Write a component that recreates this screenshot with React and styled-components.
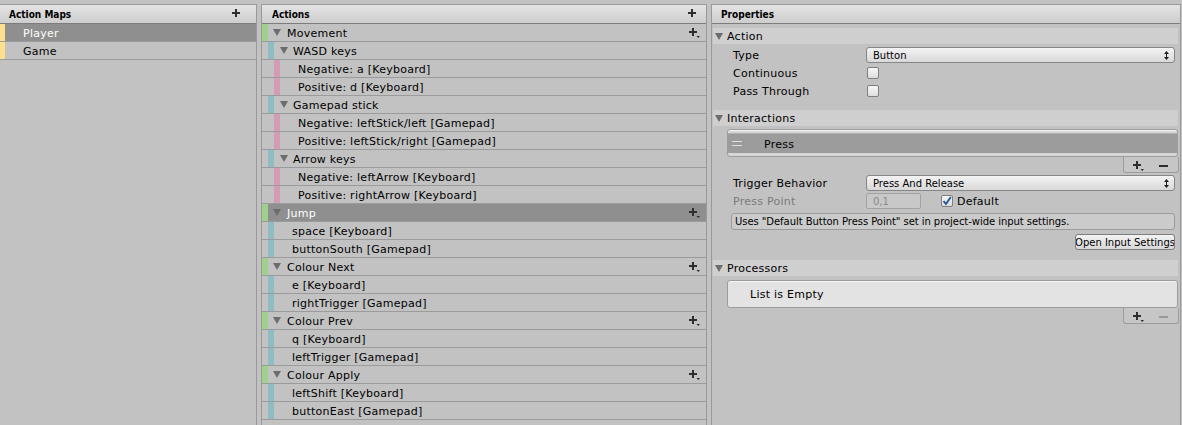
import React from 'react';
import styled, { createGlobalStyle } from 'styled-components';

const GlobalStyle = createGlobalStyle`
  html, body {
    margin: 0;
    padding: 0;
    background: #c2c2c2;
  }
  body {
    font-family: "DejaVu Sans", Verdana, sans-serif;
    font-size: 11px;
    letter-spacing: 0.25px;
    color: #000;
    overflow: hidden;
  }
`;

const COLORS = {
    map: '#fde08c',
    action: '#9fd08e',
    composite: '#90bcc3',
    part: '#d49bb6',
};

const Window = styled.div`
    display: flex;
    gap: 4px;
    height: 421px;
    padding-top: 4px;
`;

const Panel = styled.section`
    box-sizing: border-box;
    width: ${p => p.$width}px;
    flex-shrink: 0;
    display: flex;
    flex-direction: column;
    border: 1px solid #999;
    border-bottom: none;
    border-left-width: ${p => (p.$noLeft ? 0 : 1)}px;
    overflow: hidden;
`;

const PanelHeader = styled.header`
    display: flex;
    align-items: center;
    height: 18px;
    padding: 0 7px 0 ${p => p.$pad}px;
    background: linear-gradient(#e4e4e4, #cdcdcd);
    border-bottom: 1px solid #7d7d7d;
    font-family: "DejaVu Sans Condensed", "Liberation Sans", sans-serif;
    font-weight: bold;
    font-size: 10px;
    letter-spacing: 0;
    flex-shrink: 0;
`;

const Spacer = styled.div`
    flex-grow: 1;
`;

const Row = styled.div`
    display: flex;
    align-items: center;
    height: 17px;
    border-bottom: 1px solid #9b9b9b;
    background: ${p => (p.$selected ? '#8f8f8f' : 'transparent')};
    color: ${p => (p.$selected ? '#fff' : '#000')};
    white-space: nowrap;
`;

const Bar = styled.span`
    align-self: stretch;
    flex-shrink: 0;
    width: ${p => p.$w}px;
    margin-left: ${p => p.$indent}px;
    background: ${p => p.$color};
`;

const Fold = styled.span`
    flex-shrink: 0;
    width: 0;
    height: 0;
    margin-left: ${p => p.$ml}px;
    border-left: 4px solid transparent;
    border-right: 4px solid transparent;
    border-top: 7px solid #6c6c6c;
`;

const Label = styled.span`
    margin-left: ${p => p.$ml}px;
    padding-top: 1px;
`;

const RowIcon = styled.span`
    display: flex;
    padding-right: 6px;
`;

const PlusIcon = ({ arrow }) => (
    <svg width="11" height="10" viewBox="0 0 11 10">
        <path d="M4 0v8M0 4h8" stroke="#2e2e2e" strokeWidth="2" />
        {arrow && <path d="M7.5 8h3.5l-1.75 2z" fill="#2e2e2e" />}
    </svg>
);

const MinusIcon = ({ dim }) => (
    <svg width="9" height="2" viewBox="0 0 9 2">
        <path d="M0 1h9" stroke={dim ? '#9a9a9a' : '#2e2e2e'} strokeWidth="2" />
    </svg>
);

const actionRows = [
    { kind: 'action', text: 'Movement' },
    { kind: 'composite', text: 'WASD keys' },
    { kind: 'part', text: 'Negative: a [Keyboard]' },
    { kind: 'part', text: 'Positive: d [Keyboard]' },
    { kind: 'composite', text: 'Gamepad stick' },
    { kind: 'part', text: 'Negative: leftStick/left [Gamepad]' },
    { kind: 'part', text: 'Positive: leftStick/right [Gamepad]' },
    { kind: 'composite', text: 'Arrow keys' },
    { kind: 'part', text: 'Negative: leftArrow [Keyboard]' },
    { kind: 'part', text: 'Positive: rightArrow [Keyboard]' },
    { kind: 'action', text: 'Jump', selected: true },
    { kind: 'binding', text: 'space [Keyboard]' },
    { kind: 'binding', text: 'buttonSouth [Gamepad]' },
    { kind: 'action', text: 'Colour Next' },
    { kind: 'binding', text: 'e [Keyboard]' },
    { kind: 'binding', text: 'rightTrigger [Gamepad]' },
    { kind: 'action', text: 'Colour Prev' },
    { kind: 'binding', text: 'q [Keyboard]' },
    { kind: 'binding', text: 'leftTrigger [Gamepad]' },
    { kind: 'action', text: 'Colour Apply' },
    { kind: 'binding', text: 'leftShift [Keyboard]' },
    { kind: 'binding', text: 'buttonEast [Gamepad]' },
];

const TreeRow = ({ row }) => {
    if (row.kind === 'action') {
        return (
            <Row $selected={row.selected}>
                <Bar $w={6} $indent={0} $color={COLORS.action} />
                <Fold $ml={5} />
                <Label $ml={6}>{row.text}</Label>
                <Spacer />
                <RowIcon><PlusIcon arrow /></RowIcon>
            </Row>
        );
    }
    if (row.kind === 'composite') {
        return (
            <Row>
                <Bar $w={6} $indent={6} $color={COLORS.composite} />
                <Fold $ml={6} />
                <Label $ml={5}>{row.text}</Label>
            </Row>
        );
    }
    const isPart = row.kind === 'part';
    return (
        <Row>
            <Bar $w={6} $indent={isPart ? 12 : 6} $color={isPart ? COLORS.part : COLORS.composite} />
            <Label $ml={18}>{row.text}</Label>
        </Row>
    );
};

/* ---- properties ---- */

const PropsBody = styled.div`
    display: flex;
    flex-direction: column;
    padding: 0 2px 0 1px;
`;

const Foldout = styled.div`
    display: flex;
    align-items: center;
    height: 16px;
    margin-top: ${p => p.$mt}px;
    background: #cfcfcf;
`;

const FieldRow = styled.div`
    display: grid;
    grid-template-columns: 133px 1fr;
    align-items: center;
    height: 16px;
    margin: ${p => p.$mt}px 3px 0 20px;
    color: ${p => (p.$disabled ? '#7b7b7b' : '#000')};
`;

const Inline = styled.div`
    display: flex;
    align-items: center;
`;

const Popup = styled.div`
    box-sizing: border-box;
    display: flex;
    align-items: center;
    height: 16px;
    padding: 0 5px 0 6px;
    border: 1px solid #868686;
    border-radius: 3px;
    background: linear-gradient(#f3f3f3, #d9d9d9);
    font-size: 10px;
    letter-spacing: 0;
`;

const PopupArrows = () => (
    <svg width="5" height="9" viewBox="0 0 5 9">
        <path d="M0 3L2.5 0L5 3z M0 6L2.5 9L5 6z" fill="#222" />
        <path d="M2.5 3v3" stroke="#222" strokeWidth="1" />
    </svg>
);

const Check = styled.span`
    box-sizing: border-box;
    display: flex;
    align-items: center;
    justify-content: center;
    width: 12px;
    height: 12px;
    margin-left: ${p => p.$ml || 1}px;
    border: 1px solid #7f7f7f;
    border-radius: 2px;
    background: linear-gradient(#f6f6f6, #dedede);
`;

const CheckMark = () => (
    <svg width="10" height="10" viewBox="0 0 10 10">
        <path d="M1.5 5.2L4 8L8.8 1" stroke="#245a9c" strokeWidth="2" fill="none" />
    </svg>
);

const TextField = styled.div`
    box-sizing: border-box;
    display: flex;
    align-items: center;
    width: 55px;
    height: 16px;
    padding-left: 6px;
    border: 1px solid #a2a2a2;
    border-radius: 2px;
    background: #c8c8c8;
    color: #8a8a8a;
    font-size: 10px;
    letter-spacing: 0;
`;

const ListBox = styled.div`
    display: flex;
    align-items: center;
    box-sizing: border-box;
    height: 28px;
    margin: ${p => p.$mt}px 0 0 14px;
    padding: 3px 0 3px;
    border: 1px solid #9c9c9c;
    border-radius: 3px;
    background: ${p => (p.$empty ? '#e3e3e3' : '#d6d6d6')};
    box-shadow: inset 0 1px 0 #f4f4f4;
`;

const ListElement = styled.div`
    display: flex;
    align-items: center;
    flex-grow: 1;
    align-self: stretch;
    background: #9c9c9c;
    border-top: 1px solid #b1b1b1;
`;

const Handle = styled.span`
    width: 10px;
    height: 3px;
    margin-left: 4px;
    border-top: 1px solid #dedede;
    border-bottom: 1px solid #dedede;
`;

const ListFooter = styled.div`
    display: flex;
    align-items: center;
    align-self: flex-end;
    box-sizing: border-box;
    width: 56px;
    height: 16px;
    margin-right: -1px;
    padding: 2px 0 0 9px;
    gap: 15px;
    border: 1px solid #9c9c9c;
    border-top: none;
    border-radius: 0 0 3px 3px;
    background: #c6c6c6;
`;

const HelpBox = styled.div`
    box-sizing: border-box;
    display: flex;
    align-items: center;
    height: 17px;
    margin: 4px 3px 0 18px;
    padding-left: 3px;
    border: 1px solid #9b9b9b;
    border-radius: 3px;
    background: #cbcbcb;
    font-size: 10px;
    letter-spacing: -0.05px;
    white-space: nowrap;
    overflow: hidden;
`;

const ButtonRow = styled.div`
    display: flex;
    justify-content: flex-end;
    margin: 4px 3px 0 0;
`;

const Button = styled.div`
    box-sizing: border-box;
    display: flex;
    justify-content: center;
    align-items: center;
    width: 100px;
    height: 16px;
    padding: 0 3px;
    border: 1px solid #7e7e7e;
    border-radius: 3px;
    background: linear-gradient(#f3f3f3, #d8d8d8);
    font-size: 10px;
    letter-spacing: 0;
    overflow: hidden;
`;

const ButtonText = styled.span`
    flex-shrink: 0;
    white-space: nowrap;
`;

const Properties = () => (
    <PropsBody>
        <Foldout $mt={4}>
            <Fold $ml={2} />
            <Label $ml={4}>Action</Label>
        </Foldout>
        <FieldRow $mt={3}>
            <span>Type</span>
            <Popup>Button<Spacer /><PopupArrows /></Popup>
        </FieldRow>
        <FieldRow $mt={2}>
            <span>Continuous</span>
            <Inline><Check /></Inline>
        </FieldRow>
        <FieldRow $mt={2}>
            <span>Pass Through</span>
            <Inline><Check /></Inline>
        </FieldRow>

        <Foldout $mt={11}>
            <Fold $ml={2} />
            <Label $ml={4}>Interactions</Label>
        </Foldout>
        <ListBox $mt={3}>
            <ListElement>
                <Handle />
                <Label $ml={22}>Press</Label>
            </ListElement>
        </ListBox>
        <ListFooter>
            <PlusIcon arrow />
            <MinusIcon />
        </ListFooter>
        <FieldRow $mt={2}>
            <span>Trigger Behavior</span>
            <Popup>Press And Release<Spacer /><PopupArrows /></Popup>
        </FieldRow>
        <FieldRow $mt={2} $disabled>
            <span>Press Point</span>
            <Inline>
                <TextField>0,1</TextField>
                <Check $ml={20}><CheckMark /></Check>
                <Label $ml={4} style={{ color: '#000' }}>Default</Label>
            </Inline>
        </FieldRow>
        <HelpBox>Uses "Default Button Press Point" set in project-wide input settings.</HelpBox>
        <ButtonRow>
            <Button><ButtonText>Open Input Settings</ButtonText></Button>
        </ButtonRow>

        <Foldout $mt={10}>
            <Fold $ml={2} />
            <Label $ml={4}>Processors</Label>
        </Foldout>
        <ListBox $mt={4} $empty>
            <Label $ml={22}>List is Empty</Label>
        </ListBox>
        <ListFooter>
            <PlusIcon arrow />
            <MinusIcon dim />
        </ListFooter>
    </PropsBody>
);

export default function App() {
    return (
        <>
            <GlobalStyle />
            <Window>
                <Panel $width={257} $noLeft>
                    <PanelHeader $pad={9}>
                        Action Maps
                        <Spacer />
                        <RowIcon><PlusIcon /></RowIcon>
                    </PanelHeader>
                    <Row $selected>
                        <Bar $w={5} $indent={0} $color={COLORS.map} />
                        <Label $ml={18}>Player</Label>
                    </Row>
                    <Row>
                        <Bar $w={5} $indent={0} $color={COLORS.map} />
                        <Label $ml={18}>Game</Label>
                    </Row>
                </Panel>
                <Panel $width={446}>
                    <PanelHeader $pad={10}>
                        Actions
                        <Spacer />
                        <PlusIcon />
                    </PanelHeader>
                    {actionRows.map((row, i) => (
                        <TreeRow key={i} row={row} />
                    ))}
                </Panel>
                <Panel $width={470}>
                    <PanelHeader $pad={9}>Properties</PanelHeader>
                    <Properties />
                </Panel>
            </Window>
        </>
    );
}
